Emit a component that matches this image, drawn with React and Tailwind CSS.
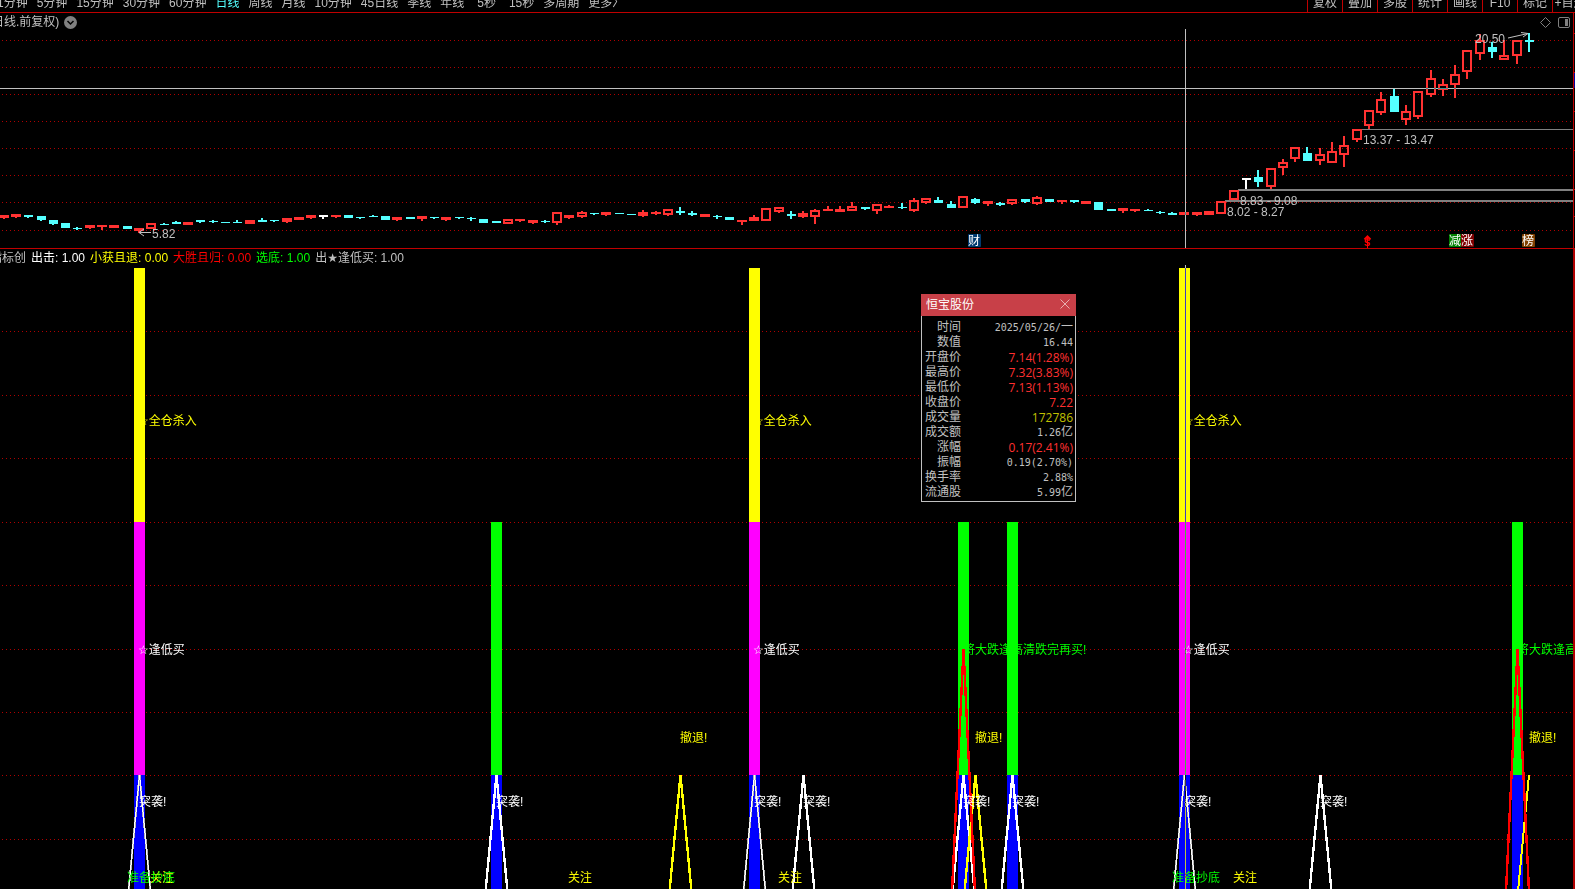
import React, { useState } from 'react'
import clsx from 'clsx'

const RED = '#ff3232'
const CYAN = '#54ffff'
const WHITE = '#ffffff'
const GRID = '#b00000'

const periods = [
  '1分钟', '5分钟', '15分钟', '30分钟', '60分钟', '日线', '周线', '月线',
  '10分钟', '45日线', '季线', '年线', '5秒', '15秒', '多周期', '更多〉'
]

const tools = ['复权', '叠加', '多股', '统计', '画线', 'F10', '标记', '+自选']

const legend = [
  { label: '出击: 1.00', color: 'text-white' },
  { label: '小获且退: 0.00', color: 'text-[#ffff00]' },
  { label: '大胜且归: 0.00', color: 'text-[#ff0000]' },
  { label: '选底: 1.00', color: 'text-[#00ff00]' }
]

const quote = [
  { label: '时间', value: '2025/05/26/一' },
  { label: '数值', value: '16.44' },
  { label: '开盘价', value: '7.14(1.28%)', tone: 'up' },
  { label: '最高价', value: '7.32(3.83%)', tone: 'up' },
  { label: '最低价', value: '7.13(1.13%)', tone: 'up' },
  { label: '收盘价', value: '7.22', tone: 'up' },
  { label: '成交量', value: '172786', tone: 'volume' },
  { label: '成交额', value: '1.26亿' },
  { label: '涨幅', value: '0.17(2.41%)', tone: 'up' },
  { label: '振幅', value: '0.19(2.70%)' },
  { label: '换手率', value: '2.88%' },
  { label: '流通股', value: '5.99亿' }
]

// [center x, high, body top, body bottom, low, kind]
// kind: r = red filled, h = red hollow, c = cyan, w = white
const candles = [
  [4, 215, 215, 218, 219, 'r'], [16, 214, 214, 217, 218, 'r'], [28, 215, 215, 217, 218, 'c'],
  [41, 216, 216, 220, 221, 'c'], [53, 220, 220, 224, 225, 'c'], [65, 223, 223, 228, 228, 'c'],
  [77, 227, 228, 229, 230, 'c'], [90, 225, 225, 228, 229, 'r'], [102, 225, 225, 227, 230, 'r'],
  [114, 225, 225, 228, 228, 'r'], [127, 226, 226, 229, 229, 'c'], [139, 228, 228, 231, 233, 'r'],
  [151, 223, 223, 229, 229, 'h'], [164, 223, 224, 225, 225, 'c'], [176, 221, 222, 224, 224, 'c'],
  [188, 222, 222, 225, 225, 'r'], [200, 220, 220, 222, 223, 'c'], [213, 220, 221, 222, 223, 'c'],
  [225, 222, 222, 223, 223, 'c'], [237, 220, 222, 223, 223, 'c'], [250, 220, 220, 224, 224, 'r'],
  [262, 218, 220, 222, 222, 'c'], [274, 220, 220, 221, 222, 'c'], [287, 218, 218, 222, 223, 'r'],
  [299, 217, 217, 220, 220, 'r'], [311, 215, 215, 218, 219, 'r'], [323, 215, 215, 217, 219, 'w'],
  [336, 215, 215, 217, 218, 'r'], [348, 215, 215, 218, 218, 'c'], [360, 217, 217, 218, 219, 'c'],
  [373, 215, 216, 217, 217, 'c'], [385, 216, 216, 220, 220, 'c'], [397, 217, 217, 220, 221, 'r'],
  [410, 217, 217, 219, 219, 'c'], [422, 216, 216, 219, 221, 'r'], [434, 217, 217, 218, 219, 'c'],
  [446, 217, 217, 220, 221, 'r'], [459, 217, 217, 218, 219, 'c'], [471, 217, 218, 219, 221, 'c'],
  [483, 219, 219, 223, 223, 'c'], [496, 221, 221, 223, 223, 'c'], [508, 219, 219, 224, 224, 'h'],
  [520, 219, 219, 221, 222, 'r'], [533, 220, 220, 223, 224, 'r'], [545, 220, 221, 222, 223, 'c'],
  [557, 212, 212, 223, 225, 'h'], [569, 215, 215, 218, 219, 'r'], [582, 211, 212, 217, 218, 'h'],
  [594, 213, 213, 214, 215, 'c'], [606, 212, 212, 215, 216, 'r'], [619, 213, 213, 214, 214, 'c'],
  [631, 214, 214, 215, 215, 'c'], [643, 210, 212, 216, 217, 'r'], [656, 211, 212, 214, 215, 'r'],
  [668, 209, 209, 215, 216, 'h'], [680, 207, 211, 213, 215, 'c'], [692, 211, 213, 215, 216, 'c'],
  [705, 214, 214, 217, 217, 'r'], [717, 215, 216, 217, 219, 'c'], [729, 217, 217, 220, 220, 'c'],
  [742, 220, 220, 222, 225, 'r'], [754, 215, 217, 221, 221, 'r'], [766, 208, 208, 221, 221, 'h'],
  [779, 207, 207, 212, 213, 'h'], [791, 211, 214, 216, 219, 'c'], [803, 211, 213, 217, 218, 'r'],
  [815, 209, 210, 217, 224, 'h'], [828, 206, 209, 211, 211, 'r'], [840, 206, 209, 212, 212, 'r'],
  [852, 202, 206, 211, 211, 'h'], [865, 207, 207, 209, 210, 'c'], [877, 204, 204, 211, 214, 'h'],
  [889, 205, 206, 208, 208, 'r'], [902, 203, 207, 208, 209, 'c'], [914, 198, 200, 211, 212, 'h'],
  [926, 198, 198, 203, 204, 'h'], [938, 197, 200, 203, 203, 'c'], [951, 201, 204, 208, 208, 'c'],
  [963, 196, 196, 208, 208, 'h'], [975, 198, 199, 203, 204, 'c'], [988, 201, 201, 204, 206, 'r'],
  [1000, 202, 203, 205, 206, 'c'], [1012, 199, 199, 204, 205, 'h'], [1025, 199, 199, 202, 203, 'c'],
  [1037, 196, 197, 204, 205, 'h'], [1049, 199, 199, 202, 202, 'c'], [1062, 200, 200, 202, 204, 'r'],
  [1074, 200, 200, 202, 203, 'c'], [1086, 201, 201, 204, 204, 'r'], [1098, 202, 202, 210, 210, 'c'],
  [1111, 209, 209, 211, 211, 'c'], [1123, 208, 208, 211, 213, 'r'], [1135, 209, 209, 211, 212, 'r'],
  [1148, 209, 210, 211, 211, 'c'], [1160, 211, 212, 213, 214, 'c'], [1172, 212, 213, 215, 215, 'c'],
  [1184, 212, 212, 215, 215, 'r'], [1197, 212, 212, 215, 216, 'r'], [1209, 211, 211, 215, 215, 'r'],
  [1221, 201, 201, 214, 214, 'h'], [1234, 190, 190, 200, 200, 'h'], [1246, 178, 178, 180, 189, 'w'],
  [1258, 170, 177, 182, 187, 'c'], [1271, 168, 168, 187, 189, 'h'], [1283, 159, 162, 168, 175, 'h'],
  [1295, 147, 147, 159, 162, 'h'], [1307, 147, 153, 161, 161, 'c'], [1320, 148, 154, 161, 165, 'h'],
  [1332, 142, 151, 163, 163, 'h'], [1344, 136, 145, 155, 167, 'h'], [1357, 129, 129, 140, 142, 'h'],
  [1369, 110, 110, 126, 129, 'h'], [1381, 92, 99, 113, 115, 'h'], [1394, 89, 96, 112, 112, 'c'],
  [1406, 105, 111, 120, 125, 'h'], [1418, 91, 91, 117, 119, 'h'], [1431, 70, 78, 95, 97, 'h'],
  [1443, 79, 84, 90, 96, 'h'], [1455, 65, 74, 85, 98, 'h'], [1467, 50, 50, 72, 79, 'h'],
  [1480, 34, 40, 54, 60, 'h'], [1492, 42, 47, 52, 58, 'c'], [1504, 40, 55, 60, 60, 'h'],
  [1517, 40, 40, 56, 64, 'h'], [1529, 33, 40, 42, 52, 'c']
]

const badges = [
  { x: 968, text: '财', fill: '#003a70' },
  { x: 1449, text: '减', fill: '#008000' },
  { x: 1461, text: '涨', fill: '#800000' },
  { x: 1522, text: '榜', fill: '#804000' }
]

const fullBars = [139, 754, 1184]
const greenBars = [496, 963, 1012, 1517]

function Candle({ data }) {
  const [cx, high, top, bottom, low, kind] = data
  const color = kind === 'c' ? CYAN : kind === 'w' ? WHITE : RED
  const red = kind === 'r' || kind === 'h'
  const left = red ? cx - 5 : cx - 4
  const width = red ? 10 : 9

  return (
    <g fill={color}>
      {high < top && <rect x={cx - 1} y={high} width="2" height={top - high} />}
      {low > bottom && <rect x={cx - 1} y={bottom} width="2" height={low - bottom} />}
      {kind === 'h' ? (
        <rect x={left + 1} y={top + 1} width={width - 2} height={bottom - top - 2} fill="none" stroke={color} strokeWidth="2" />
      ) : (
        <rect x={left} y={top} width={width} height={bottom - top} />
      )}
    </g>
  )
}

function GridLines({ rows }) {
  return rows.map(y => (
    <line key={y} x1="2" x2="100%" y1={y + 0.5} y2={y + 0.5} stroke={GRID} strokeDasharray="1 3" />
  ))
}

// Signal spike, one candle wide on each side at the zero line (y = 902)
function Spike({ x, top = 775, color = WHITE, shaded = false }) {
  const c = x + 0.5
  return (
    <g fill="none">
      <path d={`M${c - 12} 902L${c} ${top}L${c + 12} 902`} stroke={shaded ? '#b4b4b4' : color} strokeWidth={shaded ? 2 : 2.4} />
      {shaded && <path d={`M${c - 12} 902L${c} ${top}L${c + 12} 902`} stroke={color} strokeWidth="1" />}
    </g>
  )
}

function StarLabel({ x, y, text, color }) {
  return (
    <text x={x - 1} y={y} fill={color}>
      <tspan fontFamily="DejaVu Sans" fontWeight="bold">☆</tspan>
      {text}
    </text>
  )
}

function PriceChart() {
  return (
    <svg className="block w-full h-[219px] text-[12px]" aria-label="日线">
      <g transform="translate(0 -29)">
        <g shapeRendering="crispEdges">
          <GridLines rows={[40, 67, 94, 121, 148, 175, 202, 230]} />
          <g fill="#808080">
            <rect x="1361" y="129" width="100%" height="1" />
            <rect x="1238" y="189" width="100%" height="2" />
            <rect x="1225" y="200" width="100%" height="2" />
          </g>
          {candles.map(c => <Candle key={c[0]} data={c} />)}
        </g>

        <g fill="#c0c0c0">
          <text x="152" y="238">5.82</text>
          <text x="1475" y="43">20.50</text>
          <text x="1363" y="144">13.37 - 13.47</text>
          <text x="1240" y="205">8.83 - 9.08</text>
          <text x="1227" y="216">8.02 - 8.27</text>
        </g>
        <g stroke="#c0c0c0" fill="none">
          <path d="M151 232.5H139M144 229L139 232.5L144 236" />
          <path d="M1508 38L1528 33.5M1521 32.5L1528 33.5L1523 37" />
        </g>

        {badges.map(b => (
          <g key={b.text}>
            <rect x={b.x} y="234" width="13" height="13" rx="1" fill={b.fill} />
            <text x={b.x} y="245" fill="#ffffff">{b.text}</text>
          </g>
        ))}
        <text x="1364" y="246" fill="#ff0000" fontWeight="bold">s</text>
        <path d="M1364.500 239.500L1367.500 236.500L1370.500 239.500" stroke="#ff0000" strokeWidth="2" fill="none" />
        <path d="M1367.500 237V248" stroke="#ff0000" fill="none" />

        <g className="mix-blend-difference" fill="#c0c0c0" shapeRendering="crispEdges">
          <rect x="0" y="88" width="100%" height="1" />
          <rect x="1185" y="29" width="1" height="219" />
        </g>
      </g>
    </svg>
  )
}

function SignalChart() {
  return (
    <svg className="block w-full flex-1 min-h-0 text-[12px]" aria-label="指标">
      <g transform="translate(0 -265)">
        <g shapeRendering="crispEdges">
          <GridLines rows={[331, 395, 458, 522, 585, 649, 712, 775, 839]} />
        </g>

        <g fill="#00ff00">
          <text x="963" y="654">将大跌逢高清跌完再买!</text>
          <text x="1517" y="654">将大跌逢高清跌完再买!</text>
        </g>

        <g shapeRendering="crispEdges">
          {fullBars.map(x => (
            <g key={x}>
              <rect x={x - 5} y="268" width="11" height="254" fill="#ffff00" />
              <rect x={x - 5} y="522" width="11" height="253" fill="#ff00ff" />
              <rect x={x - 5} y="775" width="11" height="127" fill="#0000ff" />
            </g>
          ))}
          {greenBars.map(x => (
            <g key={x}>
              <rect x={x - 5} y="522" width="11" height="253" fill="#00ff00" />
              <rect x={x - 5} y="775" width="11" height="127" fill="#0000ff" />
            </g>
          ))}

          {fullBars.map(x => <Spike key={x} x={x} shaded />)}
          {[496, 803, 963, 1012, 1320].map(x => <Spike key={x} x={x} />)}
          {[680, 975].map(x => <Spike key={x} x={x} color="#ffff00" />)}
          <path d="M1529 775L1517 902" stroke="#ffff00" strokeWidth="2" />
          {[963, 1517].map(x => <Spike key={x} x={x} top={649} color="#ff0000" />)}
        </g>

        {fullBars.map(x => (
          <g key={x}>
            <StarLabel x={x} y={425} text="全仓杀入" color="#ffff00" />
            <StarLabel x={x} y={654} text="逢低买" color="#ffffff" />
          </g>
        ))}
        <g fill="#ffffff">
          {[139, 496, 754, 803, 963, 1012, 1184, 1320].map(x => (
            <text key={x} x={x} y="806">突袭!</text>
          ))}
        </g>
        <g fill="#ffff00">
          {[680, 975, 1529].map(x => <text key={x} x={x} y="742">撤退!</text>)}
          {[150, 568, 778, 1233].map(x => <text key={x} x={x} y="882">关注</text>)}
        </g>
        <g fill="#00ff00">
          {[127, 1172].map(x => <text key={x} x={x} y="882">准备抄底</text>)}
        </g>

        <rect className="mix-blend-difference" x="1185" y="265" width="1" height="100%" fill="#c0c0c0" shapeRendering="crispEdges" />
      </g>
    </svg>
  )
}

function QuotePanel({ onClose }) {
  return (
    <div className="absolute left-[921px] top-[294px] w-[155px] bg-black">
      <div className="flex h-[22px] items-center justify-between bg-[#c84048] pl-[5px] pr-[6px]">
        <h2 className="text-[12px] leading-[16px] text-white">恒宝股份</h2>
        <button type="button" aria-label="关闭" onClick={onClose}>
          <svg className="-mt-[2px]" width="10" height="10" viewBox="0 0 10 10" stroke="#e8b0b0" fill="none">
            <path d="M0.500 0.500L9.500 9.500M9.500 0.500L0.500 9.500" />
          </svg>
        </button>
      </div>
      <div className="border border-t-0 border-[#c0c0c0] pt-[4px] pb-[1px] pl-[3px] pr-[2px]">
        <table className="w-full border-collapse text-[12px] leading-[15px] text-[#c0c0c0]">
          <tbody>
            {quote.map(q => (
              <tr key={q.label} className="h-[15px]">
                <th scope="row" className="w-[36px] p-0 text-right font-normal whitespace-nowrap">{q.label}</th>
                <td
                  className={clsx(
                    'p-0 text-right whitespace-nowrap',
                    q.tone === 'up' && 'font-["Open_Sans"] font-medium text-[#ff3030]',
                    q.tone === 'volume' && 'font-["Open_Sans"] font-medium text-[#c0c000]',
                    !q.tone && 'font-["DejaVu_Sans_Mono","Noto_Sans_CJK_SC",monospace] text-[10px]'
                  )}
                >
                  {/[亿一]$/.test(q.value) ? (
                    <>{q.value.slice(0, -1)}<span className="text-[12px] leading-none">{q.value.slice(-1)}</span></>
                  ) : q.value}
                </td>
              </tr>
            ))}
          </tbody>
        </table>
      </div>
    </div>
  )
}

export default function App() {
  const [period, setPeriod] = useState('日线')
  const [showQuote, setShowQuote] = useState(true)

  return (
    <div className='relative flex h-screen flex-col overflow-hidden bg-black font-["Liberation_Sans","Noto_Sans_CJK_SC",sans-serif] text-[12px] text-[#c0c0c0]'>
      <header className="flex h-[13px] shrink-0 items-end justify-between overflow-hidden border-b border-[#c00000] leading-[18px]">
        <nav className="-ml-[3px] flex shrink-0 gap-[9px]">
          {periods.map(p => (
            <button
              key={p}
              type="button"
              onClick={() => setPeriod(p)}
              className={clsx('whitespace-nowrap', p.endsWith('秒') && 'pl-[4px]', p === period && 'text-[#54ffff]')}
            >
              {p}
            </button>
          ))}
        </nav>
        <div className="flex w-[268px] shrink-0 overflow-hidden">
          {tools.map(t => (
            <button key={t} type="button" className="w-[35px] shrink-0 border-l border-[#c00000] text-center whitespace-nowrap">
              {t}
            </button>
          ))}
        </div>
      </header>

      <section className="flex shrink-0 border-b border-[#c00000]">
        <div className="min-w-0 flex-1 border-r border-[#c00000]">
          <div className="flex h-[16px] items-center justify-between pt-[2px] pr-[3px]">
            <div className="-ml-[8px] flex items-center gap-[5px]">
              <h1 className="text-[12px] leading-[16px]">日线.前复权)</h1>
              <button type="button" aria-label="展开">
                <svg width="13" height="13" viewBox="0 0 13 13" fill="none">
                  <circle cx="6.500" cy="6.500" r="6.500" fill="#808080" />
                  <path d="M3.500 5L6.500 8L9.500 5" stroke="#000000" strokeWidth="1.500" />
                </svg>
              </button>
            </div>
            <div className="flex items-center gap-[7px]">
              <button type="button" aria-label="标记">
                <svg width="11" height="11" viewBox="0 0 11 11" fill="none" stroke="#808080">
                  <path d="M5.500 0.500L10.500 5.500L5.500 10.500L0.500 5.500Z" />
                </svg>
              </button>
              <button type="button" aria-label="侧栏">
                <svg width="12" height="11" viewBox="0 0 12 11" fill="none" stroke="#808080">
                  <rect x="0.500" y="0.500" width="11" height="10" rx="1.500" />
                  <rect x="7" y="2" width="3" height="7" fill="#808080" stroke="none" />
                </svg>
              </button>
            </div>
          </div>
          <PriceChart />
        </div>
        <svg className="block w-[1px] shrink-0" height="235" shapeRendering="crispEdges">
          {[20, 59, 98, 137, 176, 203].map(y => <rect key={y} y={y} width="1" height="1" fill="#c00000" />)}
          <rect y="60" width="1" height="15" fill="#0000a0" />
        </svg>
      </section>

      <section className="flex min-h-0 flex-1 flex-col border-r-2 border-[#b00000]">
        <div className="-ml-[10px] flex h-[16px] shrink-0 items-center gap-[5px] pt-[1px] leading-[16px]">
          <span>指标创</span>
          {legend.map(l => <span key={l.label} className={l.color}>{l.label}</span>)}
          <span>
            出<span className='font-["DejaVu_Sans"] leading-none'>★</span>逢低买: 1.00
          </span>
        </div>
        <SignalChart />
      </section>

      {showQuote && <QuotePanel onClose={() => setShowQuote(false)} />}
    </div>
  )
}
